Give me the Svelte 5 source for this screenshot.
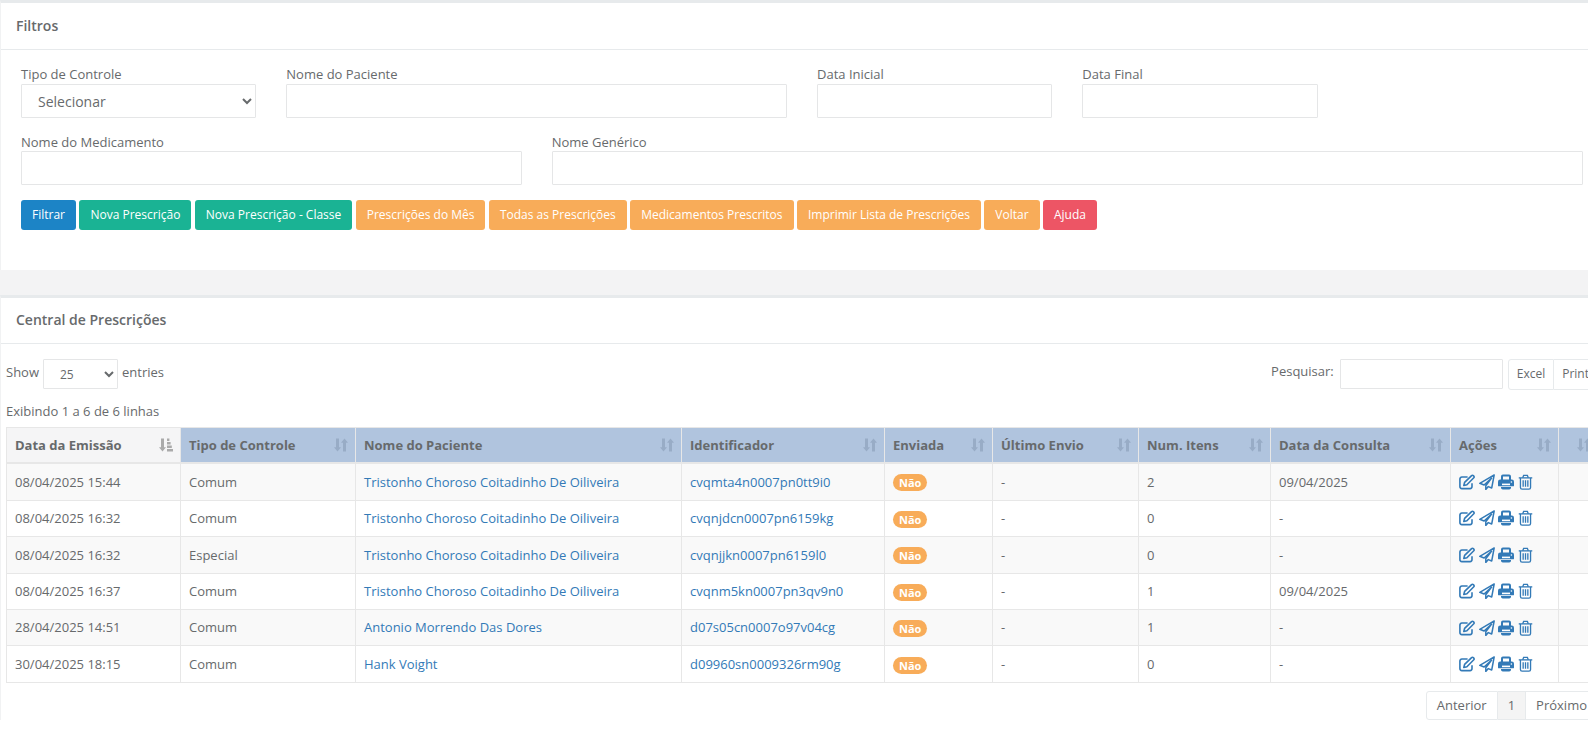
<script lang="ts">
  const orange = ['Prescrições do Mês', 'Todas as Prescrições', 'Medicamentos Prescritos', 'Imprimir Lista de Prescrições', 'Voltar']

  const columns = [
    { label: 'Data da Emissão', width: 174 },
    { label: 'Tipo de Controle', width: 175 },
    { label: 'Nome do Paciente', width: 326 },
    { label: 'Identificador', width: 203 },
    { label: 'Enviada', width: 108 },
    { label: 'Último Envio', width: 146 },
    { label: 'Num. Itens', width: 132 },
    { label: 'Data da Consulta', width: 180 },
    { label: 'Ações', width: 108 },
    { label: '', width: 40 },
  ]

  const rows = [
    ['08/04/2025 15:44', 'Comum', 'Tristonho Choroso Coitadinho De Oiliveira', 'cvqmta4n0007pn0tt9i0', '2', '09/04/2025'],
    ['08/04/2025 16:32', 'Comum', 'Tristonho Choroso Coitadinho De Oiliveira', 'cvqnjdcn0007pn6159kg', '0', '-'],
    ['08/04/2025 16:32', 'Especial', 'Tristonho Choroso Coitadinho De Oiliveira', 'cvqnjjkn0007pn6159l0', '0', '-'],
    ['08/04/2025 16:37', 'Comum', 'Tristonho Choroso Coitadinho De Oiliveira', 'cvqnm5kn0007pn3qv9n0', '1', '09/04/2025'],
    ['28/04/2025 14:51', 'Comum', 'Antonio Morrendo Das Dores', 'd07s05cn0007o97v04cg', '1', '-'],
    ['30/04/2025 18:15', 'Comum', 'Hank Voight', 'd09960sn0009326rm90g', '0', '-'],
  ]
</script>

<div class="page">
  <section class="panel first">
    <h5 class="title">Filtros</h5>
    <div class="content">
      <div class="row">
        <div class="field c2">
          <label for="tipo">Tipo de Controle</label>
          <select id="tipo"><option>Selecionar</option></select>
        </div>
        <div class="field c4">
          <label for="paciente">Nome do Paciente</label>
          <input id="paciente" />
        </div>
        <div class="field c2">
          <label for="inicial">Data Inicial</label>
          <input id="inicial" />
        </div>
        <div class="field c2">
          <label for="final">Data Final</label>
          <input id="final" />
        </div>
      </div>
      <div class="row">
        <div class="field c4">
          <label for="medicamento">Nome do Medicamento</label>
          <input id="medicamento" />
        </div>
        <div class="field c8">
          <label for="generico">Nome Genérico</label>
          <input id="generico" />
        </div>
      </div>
      <div class="actions">
        <button class="btn blue">Filtrar</button>
        <button class="btn green">Nova Prescrição</button>
        <button class="btn green">Nova Prescrição - Classe</button>
        {#each orange as label}
          <button class="btn orange">{label}</button>
        {/each}
        <button class="btn red">Ajuda</button>
      </div>
    </div>
  </section>

  <div class="band"></div>

  <section class="panel">
    <h5 class="title">Central de Prescrições</h5>
    <div class="wrapper">
      <div class="toolbar">
        <div class="length">
          Show
          <select><option>25</option></select>
          entries
        </div>
        <div class="tools">
          <span class="search-label">Pesquisar:</span>
          <input class="search" />
          <div class="group">
            <button>Excel</button>
            <button>Print</button>
          </div>
        </div>
      </div>
      <div class="info">Exibindo 1 a 6 de 6 linhas</div>

      <table>
        <colgroup>
          {#each columns as col}
            <col style="width: {col.width}px" />
          {/each}
        </colgroup>
        <thead>
          <tr>
            {#each columns as col, i}
              <th class:sorted={i === 0}>
                <span>{col.label}</span>
                <svg class="sort" viewBox="0 0 14 14" width="14" height="14">
                  <path d="M2 .5h3v8.8h2l-3.5 4.2L0 9.3h2z" />
                  {#if i === 0}
                    <path d="M8 .5h2.4v2.6H8zM8 4h3.6v2.6H8zM8 7.4h4.8V10H8zM8 10.9h6v2.6H8z" />
                  {:else}
                    <path d="M9 13.5h3V4.7h2L10.5.5 7 4.7h2z" />
                  {/if}
                </svg>
              </th>
            {/each}
          </tr>
        </thead>
        <tbody>
          {#each rows as row}
            <tr>
              <td>{row[0]}</td>
              <td>{row[1]}</td>
              <td><a href="#top">{row[2]}</a></td>
              <td><a href="#top">{row[3]}</a></td>
              <td><span class="badge">Não</span></td>
              <td>-</td>
              <td>{row[4]}</td>
              <td>{row[5]}</td>
              <td>
                <div class="icons">
                  <svg viewBox="0 0 16 16" width="16" height="16" fill="none" stroke="currentColor" stroke-width="1.6">
                    <path d="M13 9.2v3.4a2 2 0 0 1-2 2H2.9a2 2 0 0 1-2-2V5a2 2 0 0 1 2-2h5.7" />
                    <path d="M5.6 8.4l-.8 3.1 3.1-.8 6.9-6.9a1.2 1.2 0 0 0 0-1.7l-.5-.5a1.2 1.2 0 0 0-1.7 0z" stroke-linejoin="round" />
                  </svg>
                  <svg viewBox="0 0 16 16" width="16" height="16" fill="none" stroke="currentColor" stroke-width="1.5" stroke-linejoin="round">
                    <path d="M15.2.9L.8 9.3l4.3 1.7 7.5-7-5.8 7.8v3.6l2.5-2.8 3.4 1.4z" />
                  </svg>
                  <svg viewBox="0 0 16 16" width="16" height="16" fill="currentColor">
                    <path d="M3 6V2.4A1.9 1.9 0 0 1 4.9.5h6.2A1.9 1.9 0 0 1 13 2.4V6h-2V2.5H5V6z" />
                    <path d="M2.2 5.6h11.6A2.2 2.2 0 0 1 16 7.8v3.6a.9.9 0 0 1-.9.9H.9a.9.9 0 0 1-.9-.9V7.8a2.2 2.2 0 0 1 2.2-2.2z" />
                    <path d="M3 13h10v.7a1.8 1.8 0 0 1-1.8 1.8H4.8A1.8 1.8 0 0 1 3 13.7z" />
                    <rect x="4" y="9.6" width="8" height="1.6" fill="#fff" />
                    <circle cx="13.4" cy="8" r=".8" fill="#fff" />
                  </svg>
                  <svg viewBox="0 0 16 16" width="15" height="16" fill="none" stroke="currentColor" stroke-width="1.4">
                    <path d="M.8 3.6h14.4" />
                    <path d="M5 3.4l1-2.4h4l1 2.4" />
                    <path d="M2.6 3.6v10.2A1.7 1.7 0 0 0 4.3 15.5h7.4a1.7 1.7 0 0 0 1.7-1.7V3.6" />
                    <path d="M5.5 6v7M8 6v7M10.5 6v7" />
                  </svg>
                </div>
              </td>
              <td></td>
            </tr>
          {/each}
        </tbody>
      </table>

      <div class="pager">
        <div class="group">
          <button>Anterior</button>
          <button class="current">1</button>
          <button>Próximo</button>
        </div>
      </div>
    </div>
  </section>
</div>

<style>
  :global(html),
  :global(body) {
    margin: 0;
    overflow: hidden;
    background: #fff;
  }
  .page {
    width: 1604px;
    font-family: 'Open Sans', 'Liberation Sans', sans-serif;
    font-size: 13px;
    line-height: 18.57px;
    color: #676a6c;
  }
  .panel {
    background: #fff;
    border-top: 3px solid #e7eaec;
    border-left: 1px solid #f1f2f3;
  }
  .title {
    margin: 0;
    height: 45px;
    padding: 0 15px;
    display: flex;
    align-items: center;
    font-size: 14px;
    font-weight: 600;
    border-bottom: 1px solid #e7eaec;
    box-sizing: content-box;
  }
  .first .title {
    height: 46px;
  }
  .content {
    padding: 15px 20px 40px 20px;
  }
  .row {
    display: flex;
    gap: 30px;
    margin-bottom: 15px;
  }
  .field label {
    display: block;
  }
  .field input,
  .field select {
    display: block;
    width: 100%;
    height: 34px;
    box-sizing: border-box;
  }
  .c2 {
    width: 235.33px;
  }
  .c4 {
    width: 500.67px;
  }
  .c8 {
    width: 1031.33px;
  }
  input,
  select {
    border: 1px solid #e5e6e7;
    border-radius: 1px;
    background: #fff;
    font: inherit;
    color: inherit;
    outline: none;
  }
  .field select {
    padding: 6px 12px;
    font-size: 14px;
  }
  .actions {
    display: flex;
    gap: 3.45px;
  }
  .btn {
    height: 30px;
    padding: 0 10px;
    border: 1px solid transparent;
    border-radius: 3px;
    font: inherit;
    font-size: 12px;
    color: #fff;
    cursor: pointer;
  }
  .blue {
    background: #1c84c6;
  }
  .green {
    background: #1ab394;
  }
  .orange {
    background: #f8ac59;
  }
  .red {
    background: #ed5565;
  }
  .band {
    height: 25px;
    background: #f3f3f4;
  }
  .wrapper {
    padding: 15px 0 0 5px;
    width: 1592px;
  }
  .toolbar {
    display: flex;
    justify-content: space-between;
    align-items: flex-start;
    height: 31px;
  }
  .length {
    display: flex;
    align-items: center;
    gap: 4px;
    height: 30px;
    margin-top: -2px;
  }
  .length select {
    width: 75px;
    height: 30px;
    padding: 0 12px;
    font-size: 12px;
    margin-top: 4px;
  }
  .tools {
    display: flex;
    align-items: flex-start;
  }
  .search-label {
    margin: 3px 6px 0 0;
  }
  .search {
    width: 163px;
    height: 30px;
    box-sizing: border-box;
    margin-right: 5px;
  }
  .group {
    display: flex;
  }
  .group button {
    height: 31px;
    padding: 0 8px;
    background: #fff;
    border: 1px solid #e7eaec;
    border-left-width: 0;
    font: inherit;
    font-size: 12px;
    color: inherit;
    cursor: pointer;
  }
  .group button:first-child {
    border-left-width: 1px;
    border-radius: 3px 0 0 3px;
  }
  .group button:last-child {
    border-radius: 0 3px 3px 0;
  }
  .info {
    margin-top: 12px;
    height: 25px;
    line-height: 19px;
  }
  table {
    table-layout: fixed;
    width: 1592px;
    border-collapse: collapse;
  }
  th {
    height: 34px;
    padding: 0 8px;
    background: #b0c4de;
    border: 1px solid #e7e7e7;
    border-bottom: 2px solid #e7e7e7;
    text-align: left;
    font-weight: 700;
    position: relative;
    white-space: nowrap;
  }
  th.sorted {
    background: #f5f5f6;
  }
  .sort {
    position: absolute;
    right: 7px;
    top: 10px;
    fill: #8fa3bd;
    opacity: 0.7;
  }
  .sorted .sort {
    fill: #a2a2a2;
    opacity: 0.9;
  }
  td {
    height: 35.47px;
    padding: 0 8px;
    border: 1px solid #e7e7e7;
    white-space: nowrap;
  }
  tbody tr:nth-child(odd) {
    background: #f9f9f9;
  }
  a {
    color: #337ab7;
    text-decoration: none;
  }
  .badge {
    display: inline-block;
    padding: 0 6px;
    border-radius: 10px;
    background: #f8ac59;
    color: #fff;
    font-size: 11px;
    font-weight: 700;
    line-height: 17px;
    vertical-align: middle;
  }
  .icons {
    display: flex;
    gap: 3.5px;
    color: #337ab7;
  }
  .pager {
    display: flex;
    justify-content: flex-end;
    margin-top: 8px;
  }
  .pager button {
    height: 29px;
    padding: 0 10px;
    font-size: 13px;
  }
  .pager .current {
    background: #f4f4f4;
  }
</style>
